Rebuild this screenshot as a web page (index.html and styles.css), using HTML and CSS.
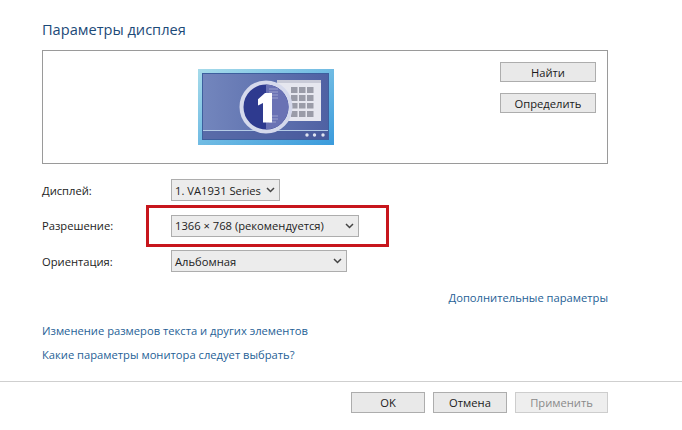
FILE: index.html
```html
<!DOCTYPE html>
<html lang="ru">
<head>
  <meta charset="UTF-8" />
  <title>Параметры дисплея</title>
  <link rel="stylesheet" href="styles.css">
</head>
<body>
  <main class="content">
    <h1 class="title">Параметры дисплея</h1>

    <section class="preview">
      <div class="monitor">
        <svg width="136" height="76" viewBox="0 0 136 76">
          <defs>
            <linearGradient id="frame" x1="0" y1="0" x2="1" y2="1">
              <stop offset="0" stop-color="#a6dbea"/>
              <stop offset="1" stop-color="#3a9bdc"/>
            </linearGradient>
            <linearGradient id="screen" x1="0" y1="0" x2="1" y2="0">
              <stop offset="0" stop-color="#7386bd"/>
              <stop offset="1" stop-color="#4f61a3"/>
            </linearGradient>
          </defs>
          <rect x="0" y="0" width="136" height="76" fill="url(#frame)"/>
          <rect x="4.500" y="4.500" width="126" height="66" fill="url(#screen)" stroke="#3d5f9e"/>
          <rect x="5" y="62" width="125" height="8" fill="#3f5296" opacity="0.500"/>
          <rect x="5" y="61" width="125" height="1" fill="#b4cbe6"/>
          <rect x="79" y="11" width="44" height="41" fill="#e6e7ef"/>
          <rect x="79" y="11" width="44" height="3" fill="#c9cbd8"/>
          <g fill="#9a9ca8">
            <rect x="93" y="18" width="6.500" height="6"/><rect x="101" y="18" width="6.500" height="6"/><rect x="109" y="18" width="6.500" height="6"/>
            <rect x="93" y="26" width="6.500" height="6"/><rect x="101" y="26" width="6.500" height="6"/><rect x="109" y="26" width="6.500" height="6"/>
            <rect x="93" y="34" width="6.500" height="5.500"/><rect x="101" y="34" width="6.500" height="5.500"/><rect x="109" y="34" width="6.500" height="5.500"/>
            <rect x="93" y="42" width="6.500" height="6"/><rect x="101" y="42" width="6.500" height="6"/><rect x="109" y="42" width="6.500" height="6"/>
          </g>
          <circle cx="68" cy="38" r="24.500" fill="#2e3a8f" stroke="#d5d9ec" stroke-width="4"/>
          <path d="M68 15.500a22.500 22.500 0 0 1 0 45z" fill="#6a72b4"/>
          <path d="M71 20h9M71 23h9M71 26h9M71 29h9M71 47h9M71 50h9M71 53h7" stroke="#9ca2cf" stroke-width="1"/>
          <path d="M74 24v29.500h-9V34l-5 2.600v-6.400L67 24z" fill="#fff"/>
          <g fill="#dfe3f0">
            <circle cx="109" cy="66" r="1.700"/><circle cx="116.500" cy="66" r="1.700"/><circle cx="125" cy="66" r="1.700"/>
          </g>
        </svg>
      </div>
      <div class="preview-actions">
        <button class="btn btn-wide">Найти</button>
        <button class="btn btn-wide">Определить</button>
      </div>
    </section>

    <section class="settings">
      <label class="setting-label">Дисплей:</label>
      <div class="combo combo-display">1. VA1931 Series
        <svg class="chevron" width="9" height="6" viewBox="0 0 9 6"><path d="M1 1l3.500 3.500L8 1" fill="none" stroke="#444" stroke-width="1.500"/></svg>
      </div>

      <label class="setting-label">Разрешение:</label>
      <div class="combo combo-resolution">1366 × 768 (рекомендуется)
        <svg class="chevron" width="9" height="6" viewBox="0 0 9 6"><path d="M1 1l3.500 3.500L8 1" fill="none" stroke="#444" stroke-width="1.500"/></svg>
        <div class="highlight"></div>
      </div>

      <label class="setting-label">Ориентация:</label>
      <div class="combo combo-orientation">Альбомная
        <svg class="chevron" width="9" height="6" viewBox="0 0 9 6"><path d="M1 1l3.500 3.500L8 1" fill="none" stroke="#444" stroke-width="1.500"/></svg>
      </div>
    </section>

    <div class="more"><a class="link" href="#">Дополнительные параметры</a></div>

    <div class="links">
      <a class="link" href="#">Изменение размеров текста и других элементов</a>
      <a class="link" href="#">Какие параметры монитора следует выбрать?</a>
    </div>
  </main>

  <footer class="footer">
    <button class="btn btn-footer">OK</button>
    <button class="btn btn-footer">Отмена</button>
    <button class="btn btn-footer btn-apply" disabled>Применить</button>
  </footer>
</body>
</html>
```

FILE: styles.css
```css
* {
  box-sizing: border-box;
}

body {
  margin: 0;
  width: 682px;
  height: 430px;
  overflow: hidden;
  background-color: #fff;
  color: #222;
  font-family: 'Open Sans', 'Noto Sans', sans-serif;
  font-size: 11.200px;
}

.content {
  padding: 20px 74px 0 42px;
  height: 381px;
}

.title {
  margin: 0;
  height: 30px;
  font-size: 14.600px;
  line-height: 18px;
  font-weight: 400;
  color: #1c4a78;
}

.preview {
  display: flex;
  justify-content: space-between;
  height: 114px;
  padding: 11px 11px 0 155px;
  border: 1px solid #9a9a9a;
}

.monitor {
  height: 76px;
  margin-top: 7px;
}

.monitor svg {
  display: block;
}

.preview-actions {
  display: flex;
  flex-direction: column;
  gap: 11px;
}

.btn {
  display: block;
  padding: 0;
  border: 1px solid #adadad;
  background-color: #e9e9e9;
  color: #1a1a1a;
  font-family: inherit;
  font-size: 11.200px;
}

.btn-wide {
  width: 96px;
  height: 20px;
}

.settings {
  display: grid;
  grid-template-columns: 129px 1fr;
  grid-auto-rows: 22px;
  row-gap: 13.500px;
  align-items: center;
  margin-top: 15px;
}

.setting-label {
  color: #222;
}

.combo {
  position: relative;
  display: flex;
  align-items: center;
  justify-content: space-between;
  height: 22px;
  padding: 0 4px 0 3px;
  border: 1px solid #adadad;
  background-color: #ececec;
  color: #222;
}

.combo-display {
  width: 109px;
}

.combo-resolution {
  width: 188px;
}

.combo-orientation {
  width: 176px;
}

.highlight {
  position: absolute;
  left: -26px;
  top: -11px;
  width: 243px;
  height: 42px;
  border: 3px solid #c7161c;
}

.more {
  margin-top: 17px;
  text-align: right;
  line-height: 18px;
}

.link {
  color: #1f5f96;
  text-decoration: none;
}

.links {
  display: flex;
  flex-direction: column;
  gap: 6px;
  margin-top: 15px;
  line-height: 18px;
}

.footer {
  display: flex;
  gap: 8px;
  height: 49px;
  padding: 10px 74px 0 351px;
  border-top: 1px solid #cfcfcf;
}

.btn-footer {
  width: 74px;
  height: 21px;
}

.btn-apply {
  width: 93px;
  border-color: #cdcdcd;
  background-color: #eee;
  color: #8a8a8a;
}
```
